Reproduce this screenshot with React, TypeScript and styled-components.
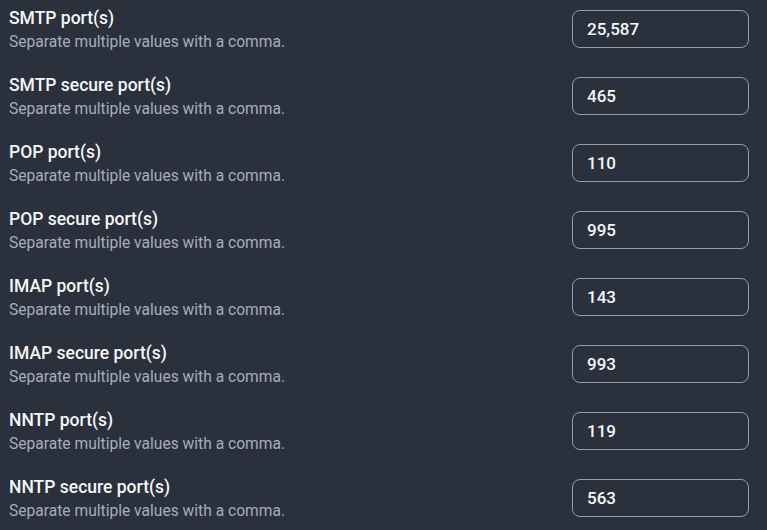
import React from "react";
import styled, { createGlobalStyle } from "styled-components";

const GlobalStyle = createGlobalStyle`
	html, body {
		margin: 0;
		padding: 0;
		background: #2a303c;
	}
	body {
		font-family: Roboto, "Liberation Sans", sans-serif;
	}
`;

const Page = styled.div`
	display: flex;
	flex-direction: column;
	gap: 29px;
	padding: 10px 18px 12px 9px;
	background: #2a303c;
	min-height: 530px;
	box-sizing: border-box;
`;

const Row = styled.div`
	display: flex;
	align-items: center;
	justify-content: space-between;
	height: 38px;
`;

const Label = styled.div`
	display: flex;
	flex-direction: column;
	padding-top: 1px;
`;

const Title = styled.div`
	font-size: 17.5px;
	line-height: 20px;
	font-weight: 500;
	color: #f5f6f8;
`;

const Hint = styled.div`
	margin-top: 5px;
	font-size: 15.6px;
	line-height: 18px;
	color: #a6adbb;
`;

const Input = styled.input`
	width: 177px;
	height: 38px;
	box-sizing: border-box;
	padding: 0 14px;
	border: 1px solid #969ba5;
	border-radius: 8px;
	background: transparent;
	color: #f5f6f8;
	font-family: Roboto, "Liberation Sans", sans-serif;
	font-size: 17px;
	font-weight: 500;
	outline: none;
`;

const fields = [
	{ name: "SMTP port(s)", value: "25,587" },
	{ name: "SMTP secure port(s)", value: "465" },
	{ name: "POP port(s)", value: "110" },
	{ name: "POP secure port(s)", value: "995" },
	{ name: "IMAP port(s)", value: "143" },
	{ name: "IMAP secure port(s)", value: "993" },
	{ name: "NNTP port(s)", value: "119" },
	{ name: "NNTP secure port(s)", value: "563" },
];

export default function App() {
	return (
		<>
			<GlobalStyle />
			<Page>
				{fields.map((each) => (
					<Row key={each.name}>
						<Label>
							<Title>{each.name}</Title>
							<Hint>Separate multiple values with a comma.</Hint>
						</Label>
						<Input type="text" defaultValue={each.value} />
					</Row>
				))}
			</Page>
		</>
	);
}
